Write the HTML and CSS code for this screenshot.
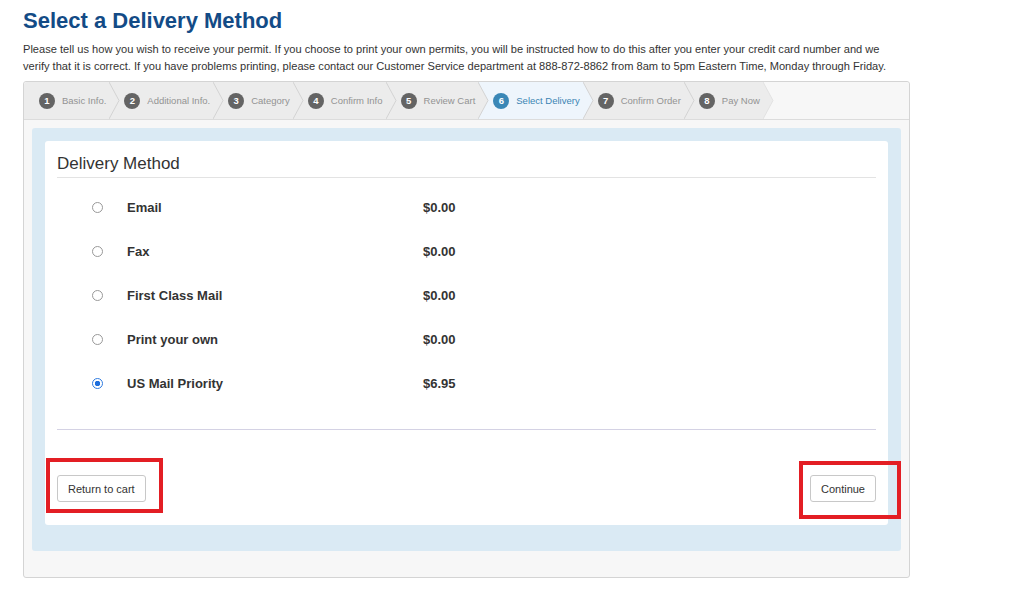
FILE: index.html
```html
<!DOCTYPE html>
<html lang="en">
<head>
    <meta charset="UTF-8">
    <title>Select a Delivery Method</title>
    <link rel="stylesheet" href="styles.css">
</head>
<body>
<div class="page">
    <h1 class="title">Select a Delivery Method</h1>
    <p class="intro">Please tell us how you wish to receive your permit. If you choose to print your own permits, you will be instructed how to do this after you enter your credit card number and we verify that it is correct. If you have problems printing, please contact our Customer Service department at 888-872-8862 from 8am to 5pm Eastern Time, Monday through Friday.</p>

    <div class="panel">
        <ul class="steps">
            <li class="step first"><span class="num">1</span>Basic Info.</li>
            <li class="sep"><svg width="11" height="37" viewBox="0 0 11 37"><rect width="11" height="37" fill="#ececec"/><path d="M0 0 L10 18.5 L0 37" fill="none" stroke="#d3d3d3"/></svg></li>
            <li class="step"><span class="num">2</span>Additional Info.</li>
            <li class="sep"><svg width="11" height="37" viewBox="0 0 11 37"><rect width="11" height="37" fill="#ececec"/><path d="M0 0 L10 18.5 L0 37" fill="none" stroke="#d3d3d3"/></svg></li>
            <li class="step"><span class="num">3</span>Category</li>
            <li class="sep"><svg width="11" height="37" viewBox="0 0 11 37"><rect width="11" height="37" fill="#ececec"/><path d="M0 0 L10 18.5 L0 37" fill="none" stroke="#d3d3d3"/></svg></li>
            <li class="step"><span class="num">4</span>Confirm Info</li>
            <li class="sep"><svg width="11" height="37" viewBox="0 0 11 37"><rect width="11" height="37" fill="#ececec"/><path d="M0 0 L10 18.5 L0 37" fill="none" stroke="#d3d3d3"/></svg></li>
            <li class="step"><span class="num">5</span>Review Cart</li>
            <li class="sep"><svg width="11" height="37" viewBox="0 0 11 37"><rect width="11" height="37" fill="#eef5fc"/><path d="M0 0 L10 18.5 L0 37 Z" fill="#ececec"/><path d="M0 0 L10 18.5 L0 37" fill="none" stroke="#d3d3d3"/></svg></li>
            <li class="step active"><span class="num">6</span>Select Delivery</li>
            <li class="sep"><svg width="11" height="37" viewBox="0 0 11 37"><rect width="11" height="37" fill="#ececec"/><path d="M0 0 L10 18.5 L0 37 Z" fill="#eef5fc"/><path d="M0 0 L10 18.5 L0 37" fill="none" stroke="#d3d3d3"/></svg></li>
            <li class="step"><span class="num">7</span>Confirm Order</li>
            <li class="sep"><svg width="11" height="37" viewBox="0 0 11 37"><rect width="11" height="37" fill="#ececec"/><path d="M0 0 L10 18.5 L0 37" fill="none" stroke="#d3d3d3"/></svg></li>
            <li class="step"><span class="num">8</span>Pay Now</li>
            <li class="sep"><svg width="11" height="37" viewBox="0 0 11 37"><rect width="11" height="37" fill="#f7f7f7"/><path d="M0 0 L10 18.5 L0 37 Z" fill="#ececec"/><path d="M0 0 L10 18.5 L0 37" fill="none" stroke="#e2e2e2"/></svg></li>
        </ul>

        <div class="well">
            <div class="card">
                <h2 class="card-title">Delivery Method</h2>
                <ul class="methods">
                    <li><input type="radio" name="delivery"><span class="label">Email</span><span class="price">$0.00</span></li>
                    <li><input type="radio" name="delivery"><span class="label">Fax</span><span class="price">$0.00</span></li>
                    <li><input type="radio" name="delivery"><span class="label">First Class Mail</span><span class="price">$0.00</span></li>
                    <li><input type="radio" name="delivery"><span class="label">Print your own</span><span class="price">$0.00</span></li>
                    <li><input type="radio" name="delivery" checked><span class="label">US Mail Priority</span><span class="price">$6.95</span></li>
                </ul>
                <div class="divider"></div>
                <div class="actions">
                    <button class="btn">Return to cart</button>
                    <button class="btn">Continue</button>
                </div>
            </div>
        </div>
    </div>
</div>
<div class="mark mark-left"></div>
<div class="mark mark-right"></div>
</body>
</html>
```

FILE: styles.css
```css
* {
    margin: 0;
    padding: 0;
    box-sizing: border-box;
}

body {
    position: relative;
    font-family: "Liberation Sans", Arial, sans-serif;
    color: #333;
    background: #fff;
}

.page {
    width: 933px;
    padding: 0 0 0 23px;
}

.title {
    margin-top: 8px;
    font-size: 22px;
    line-height: 26px;
    font-weight: bold;
    color: #134b86;
}

.intro {
    margin-top: 7px;
    width: 878px;
    font-size: 11.1px;
    line-height: 17px;
    color: #333;
}

.panel {
    margin-top: 6px;
    width: 887px;
    border: 1px solid #d4d4d4;
    border-radius: 3px;
    background: #f7f7f7;
}

.steps {
    display: flex;
    height: 38px;
    list-style: none;
    border-bottom: 1px solid #dcdcdc;
    background: #f7f7f7;
    border-radius: 3px 3px 0 0;
    overflow: hidden;
}

.steps > .step {
    display: flex;
    align-items: center;
    gap: 7px;
    height: 37px;
    padding: 0 3px 0 4px;
    background: #ececec;
    font-size: 9.5px;
    color: #939393;
    white-space: nowrap;
}

.steps > .step.first {
    padding-left: 15px;
}

.steps > .step.active {
    background: #eef5fc;
    color: #3b84b3;
}

.steps > .sep {
    height: 37px;
}

.steps > .sep svg {
    display: block;
}

.num {
    width: 16px;
    height: 16px;
    border-radius: 50%;
    background: #646464;
    color: #fff;
    font-size: 9.5px;
    font-weight: bold;
    line-height: 16px;
    text-align: center;
}

.active .num {
    background: #3a87b6;
}

.well {
    margin: 8px 8px 26px;
    padding: 13px 13px 26px;
    background: #daeaf4;
    border-radius: 3px;
}

.card {
    padding: 0 12px 23px;
    background: #fff;
    border-radius: 3px;
}

.card-title {
    padding: 13px 0 3px;
    font-size: 17px;
    line-height: 20px;
    font-weight: normal;
    color: #333;
    border-bottom: 1px solid #e3e3e3;
}

.methods {
    margin-top: 7px;
    list-style: none;
}

.methods > li {
    display: flex;
    align-items: center;
    height: 44px;
    font-size: 13px;
    font-weight: bold;
    color: #333;
}

.methods input {
    appearance: none;
    -webkit-appearance: none;
    width: 11px;
    height: 11px;
    margin: 0 24px 0 35px;
    border: 1px solid #999;
    border-radius: 50%;
    background: #fff;
}

.methods input:checked {
    border-color: #2f7be0;
    background: radial-gradient(circle, #1f6fdc 0 2.5px, #fff 3px);
}

.methods .label {
    width: 296px;
}

.divider {
    margin-top: 24px;
    height: 1px;
    background: #d4d2e4;
}

.actions {
    display: flex;
    justify-content: space-between;
    margin-top: 45px;
}

.btn {
    height: 27px;
    padding: 0 10px;
    border: 1px solid #c8c8c8;
    border-radius: 3px;
    background: #fff;
    font-family: "Liberation Sans", Arial, sans-serif;
    font-size: 11px;
    color: #333;
}

.mark {
    position: absolute;
    border: 4px solid #e31e24;
}

.mark-left {
    left: 46px;
    top: 458px;
    width: 117px;
    height: 55px;
}

.mark-right {
    left: 799px;
    top: 461px;
    width: 102px;
    height: 58px;
}
```
